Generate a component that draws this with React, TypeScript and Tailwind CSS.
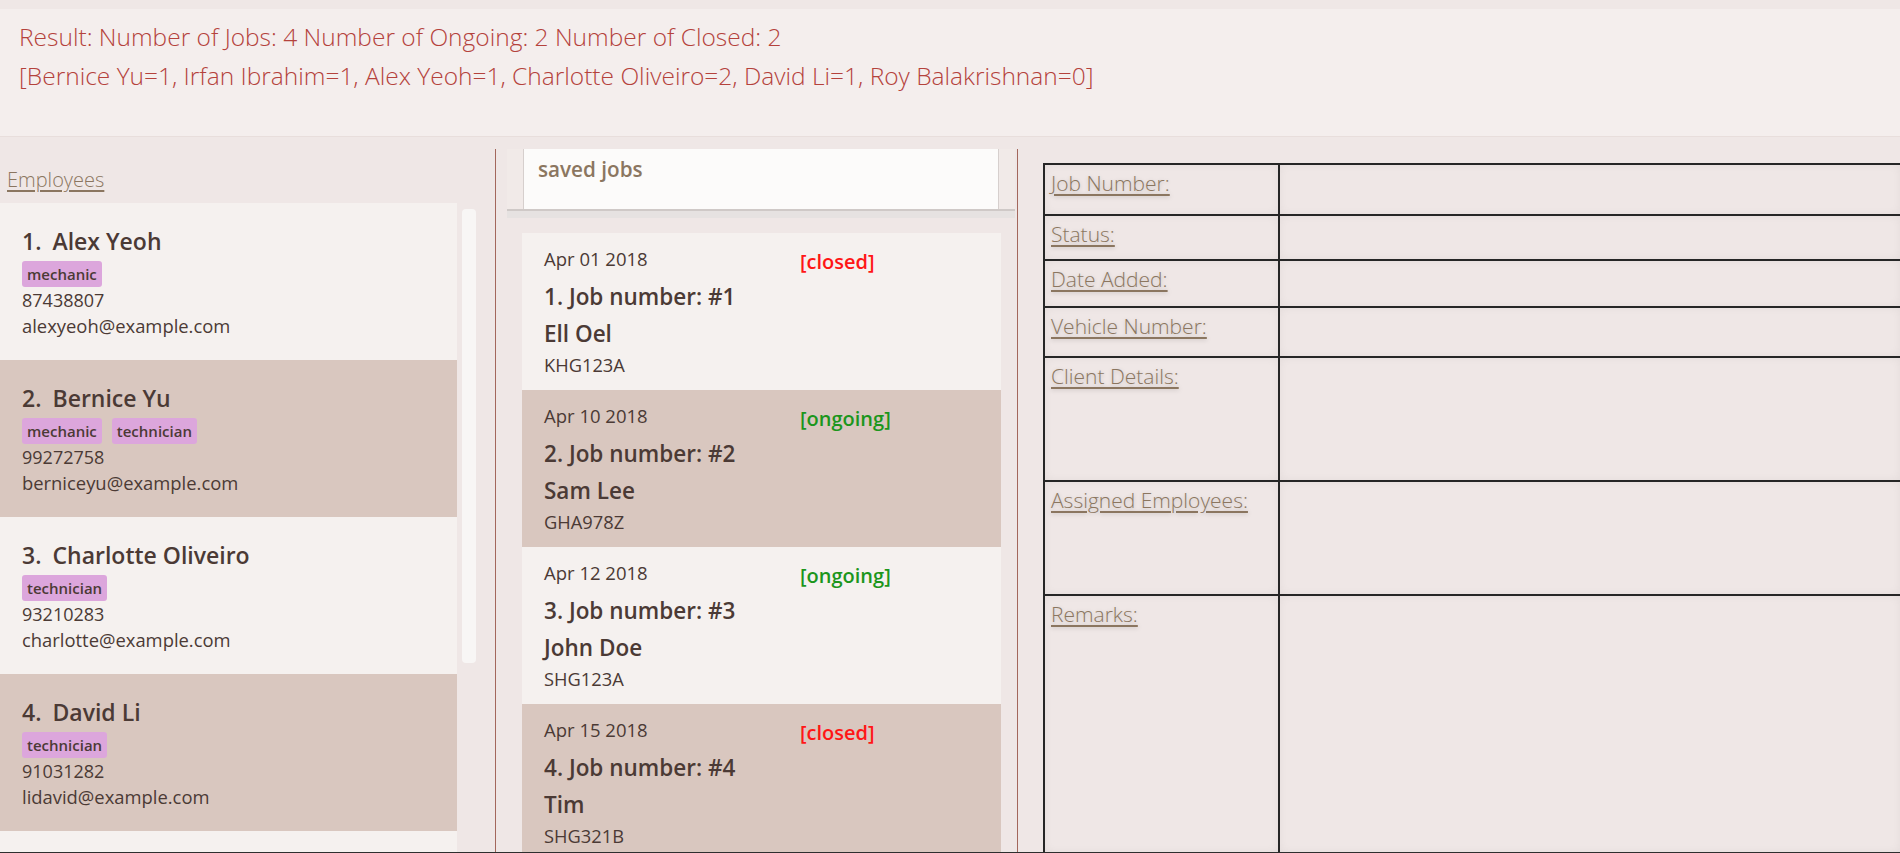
const EMPLOYEES = [
  { name: "Alex Yeoh", tags: ["mechanic"], phone: "87438807", email: "alexyeoh@example.com" },
  { name: "Bernice Yu", tags: ["mechanic", "technician"], phone: "99272758", email: "berniceyu@example.com" },
  { name: "Charlotte Oliveiro", tags: ["technician"], phone: "93210283", email: "charlotte@example.com" },
  { name: "David Li", tags: ["technician"], phone: "91031282", email: "lidavid@example.com" },
];

const JOBS = [
  { date: "Apr 01 2018", status: "closed", client: "Ell Oel", vehicle: "KHG123A" },
  { date: "Apr 10 2018", status: "ongoing", client: "Sam Lee", vehicle: "GHA978Z" },
  { date: "Apr 12 2018", status: "ongoing", client: "John Doe", vehicle: "SHG123A" },
  { date: "Apr 15 2018", status: "closed", client: "Tim", vehicle: "SHG321B" },
];

const ROWS = [
  { label: "Job Number:", h: "h-[51px]" },
  { label: "Status:", h: "h-[45px]" },
  { label: "Date Added:", h: "h-[47px]" },
  { label: "Vehicle Number:", h: "h-[50px]" },
  { label: "Client Details:", h: "h-[124px]" },
  { label: "Assigned Employees:", h: "h-[114px]" },
];

function EmployeeCard({ index, e }: { index: number; e: (typeof EMPLOYEES)[number] }) {
  const dark = index % 2 === 1;
  return (
    <div className={`h-[157px] shrink-0 pl-[22px] pt-[22px] ${dark ? "bg-[#d9c7bf]" : "bg-[#f5f1ef]"}`}>
      <div className="flex text-[23px] font-semibold leading-[32px] text-[#4b3a35]">
        <span>{index + 1}.</span>
        <span className="ml-[11px]">{e.name}</span>
      </div>
      <div className="mt-[4px] flex h-[26px] gap-[10px]">
        {e.tags.map((t) => (
          <span
            key={t}
            className="rounded-[3px] bg-[#dca6dc] px-[5px] text-[15px] font-semibold leading-[26px] text-[#4b3a35]"
          >
            {t}
          </span>
        ))}
      </div>
      <div className="text-[18px] leading-[26px] text-[#4b3a35]">{e.phone}</div>
      <div className="text-[18.4px] leading-[26px] text-[#4b3a35]">{e.email}</div>
    </div>
  );
}

function JobCard({ index, j }: { index: number; j: (typeof JOBS)[number] }) {
  const dark = index % 2 === 1;
  return (
    <div className={`h-[157px] shrink-0 pl-[22px] pt-[12px] ${dark ? "bg-[#d9c7bf]" : "bg-[#f5f1ef]"}`}>
      <div className="flex h-[28px]">
        <div className="w-[256px] text-[18.5px] leading-[28px] text-[#4b3a35]">{j.date}</div>
        <div
          className={`mt-[3px] text-[20px] font-semibold leading-[28px] ${
            j.status === "closed" ? "text-[#ff1616]" : "text-[#1c961c]"
          }`}
        >
          [{j.status}]
        </div>
      </div>
      <div className="mt-[6px] text-[22.5px] font-semibold leading-[36px] text-[#4b3a35]">
        {index + 1}. Job number: #{index + 1}
      </div>
      <div className="text-[22.5px] font-semibold leading-[38px] text-[#4b3a35]">{j.client}</div>
      <div className="text-[18.3px] leading-[24px] text-[#4b3a35]">{j.vehicle}</div>
    </div>
  );
}

function Label({ children }: { children: string }) {
  return (
    <span className="text-[21px] font-light leading-[26px] text-[#8b7660] underline underline-offset-[3px] [text-shadow:0_1px_4px_rgba(0,0,0,0.18)]">
      {children}
    </span>
  );
}

export default function App() {
  return (
    <div className="flex h-[853px] w-[1900px] flex-col overflow-hidden border-b border-[#2e2e2e] bg-[#efe7e6] font-['Open_Sans',sans-serif]">
      {/* result display */}
      <div className="h-[9px] shrink-0" />
      <div className="h-[128px] shrink-0 border-b border-[#e8dedc] bg-[#f4eeed] pl-[19px] pt-[8px] text-[24.5px] font-light leading-[39px] text-[#b4423c]">
        <div>Result: Number of Jobs: 4 Number of Ongoing: 2 Number of Closed: 2</div>
        <div>[Bernice Yu=1, Irfan Ibrahim=1, Alex Yeoh=1, Charlotte Oliveiro=2, David Li=1, Roy Balakrishnan=0]</div>
      </div>
      <div className="h-[12px] shrink-0" />

      <div className="flex min-h-0 flex-1">
        {/* employees */}
        <div className="flex w-[495px] shrink-0 flex-col">
          <div className="h-[54px] shrink-0 pl-[7px] pt-[19px]">
            <span className="text-[20px] font-light leading-[24px] text-[#8b7660] underline underline-offset-[3px]">
              Employees
            </span>
          </div>
          <div className="flex min-h-0 flex-1 gap-[5px]">
            <div className="flex w-[457px] flex-col overflow-hidden">
              {EMPLOYEES.map((e, i) => (
                <EmployeeCard key={e.name} index={i} e={e} />
              ))}
              <div className="flex-1 bg-[#f5f1ef]" />
            </div>
            <div className="mt-[6px] h-[454px] w-[14px] rounded-[4px] bg-[#f8f6f5]" />
          </div>
        </div>
        <div className="w-px shrink-0 bg-[#a3675c]" />

        {/* jobs */}
        <div className="flex w-[521px] shrink-0 flex-col pl-[11px]">
          <div className="h-[60px] w-[508px] shrink-0 bg-[#f1eae8] pl-[16px]">
            <div className="h-full w-[476px] border-x border-[#d6cfcd] bg-[#fcfbfa] pl-[14px] pt-[5px] text-[20.7px] font-semibold leading-[30px] text-[#8b7660]">
              saved jobs
            </div>
          </div>
          <div className="h-[9px] w-[508px] shrink-0 border-t-2 border-[#cfc9c7] bg-[#e6e2e1]" />
          <div className="flex min-h-0 flex-1 flex-col overflow-hidden pl-[15px] pt-[15px]">
            <div className="flex w-[479px] flex-col">
              {JOBS.map((j, i) => (
                <JobCard key={j.vehicle} index={i} j={j} />
              ))}
            </div>
          </div>
        </div>
        <div className="w-px shrink-0 bg-[#a3675c]" />

        {/* job details */}
        <div className="flex min-w-0 flex-1 flex-col pl-[25px] pt-[14px]">
          <div className="flex flex-1 flex-col border-l-2 border-t-2 border-[#262626]">
            {ROWS.map((r) => (
              <div key={r.label} className={`flex shrink-0 border-b-2 border-[#262626] ${r.h}`}>
                <div className="w-[235px] shrink-0 border-r-2 border-[#262626] pl-[6px] pt-[5px] shadow-[inset_0_0_8px_rgba(0,0,0,0.05)]">
                  <Label>{r.label}</Label>
                </div>
                <div className="flex-1 shadow-[inset_0_0_8px_rgba(0,0,0,0.05)]" />
              </div>
            ))}
            <div className="flex flex-1">
              <div className="w-[235px] shrink-0 border-r-2 border-[#262626] pl-[6px] pt-[5px] shadow-[inset_0_0_8px_rgba(0,0,0,0.05)]">
                <Label>Remarks:</Label>
              </div>
              <div className="flex-1 shadow-[inset_0_0_8px_rgba(0,0,0,0.05)]" />
            </div>
          </div>
        </div>
      </div>
    </div>
  );
}
